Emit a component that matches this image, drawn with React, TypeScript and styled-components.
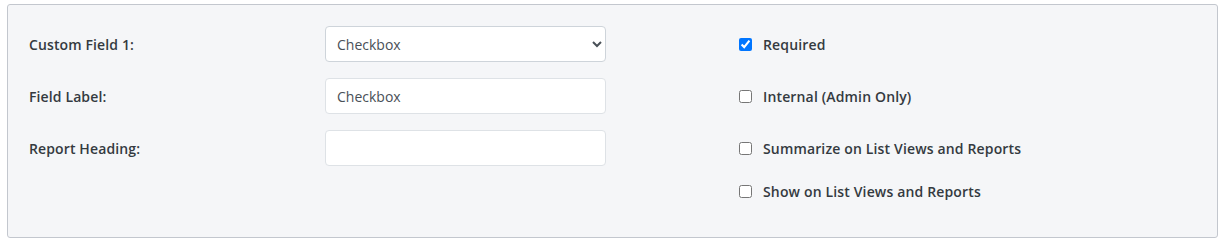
import styled, { createGlobalStyle } from "styled-components";

const GlobalStyle = createGlobalStyle`
  body {
    margin: 0;
    background: #ffffff;
    font-family: "Open Sans", "Liberation Sans", sans-serif;
  }
`;

const Panel = styled.div`
  margin: 4px 6px 0 7px;
  padding: 21px 21px 35px 21px;
  background: #f5f6f8;
  border: 1px solid #c3c7ce;
  border-radius: 3px;
  box-sizing: border-box;
  height: 234px;
`;

const Grid = styled.div`
  display: grid;
  grid-template-columns: 296px 281px 133px 1fr;
  grid-template-rows: 36px 36px 36px auto;
  row-gap: 16px;
  align-items: center;
`;

const Label = styled.label<{ $row: number }>`
  grid-column: 1;
  grid-row: ${(p) => p.$row};
  font-size: 14px;
  font-weight: 600;
  letter-spacing: 0.12px;
  color: #343a40;
`;

const Select = styled.select<{ $row: number }>`
  grid-column: 2;
  grid-row: ${(p) => p.$row};
  height: 36px;
  padding: 0 6px 0 7px;
  font-family: inherit;
  font-size: 14px;
  color: #495057;
  background: #fff;
  border: 1px solid #ced4da;
  border-radius: 4px;
  box-sizing: border-box;
  outline: none;
`;

const Input = styled.input<{ $row: number }>`
  grid-column: 2;
  grid-row: ${(p) => p.$row};
  height: 36px;
  padding: 0 11px;
  font-family: inherit;
  font-size: 14px;
  color: #495057;
  background: #fff;
  border: 1px solid #dee2e6;
  border-radius: 4px;
  box-sizing: border-box;
  outline: none;
`;

const Check = styled.label<{ $row: number }>`
  grid-column: 4;
  grid-row: ${(p) => p.$row};
  display: flex;
  align-items: center;
  gap: 11px;
  font-size: 14px;
  font-weight: 600;
  letter-spacing: 0.15px;
  color: #343a40;

  input {
    margin: 0;
    width: 13px;
    height: 13px;
  }
`;

const checks = [
  { label: "Required", checked: true },
  { label: "Internal (Admin Only)", checked: false },
  { label: "Summarize on List Views and Reports", checked: false },
  { label: "Show on List Views and Reports", checked: false },
];

export default function App() {
  return (
    <>
      <GlobalStyle />
      <Panel>
        <Grid>
          <Label $row={1}>Custom Field 1:</Label>
          <Select $row={1} defaultValue="Checkbox">
            <option>Checkbox</option>
            <option>Text</option>
          </Select>
          <Label $row={2}>Field Label:</Label>
          <Input $row={2} defaultValue="Checkbox" />
          <Label $row={3}>Report Heading:</Label>
          <Input $row={3} defaultValue="" />
          {checks.map((c, i) => (
            <Check key={c.label} $row={i + 1}>
              <input type="checkbox" defaultChecked={c.checked} />
              {c.label}
            </Check>
          ))}
        </Grid>
      </Panel>
    </>
  );
}
